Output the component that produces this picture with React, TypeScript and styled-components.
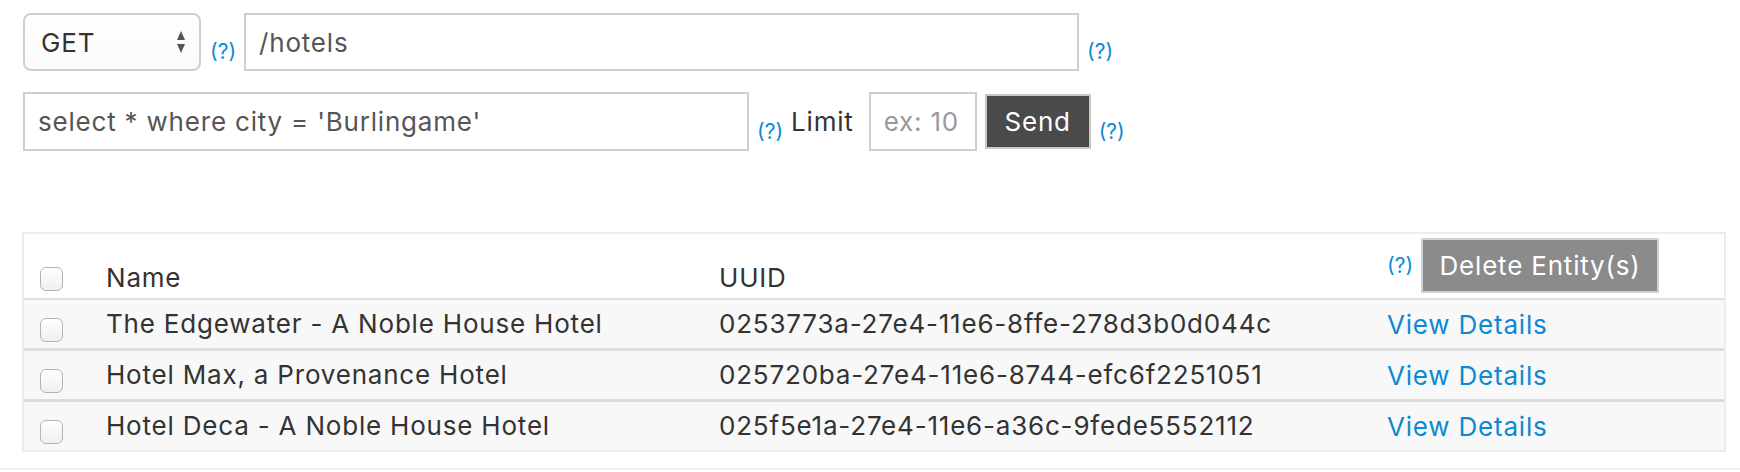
import styled, { createGlobalStyle } from 'styled-components';

const GlobalStyle = createGlobalStyle`
  html, body {
    margin: 0;
    padding: 0;
    background: #fff;
  }
  body {
    font-family: Inter, 'Liberation Sans', sans-serif;
    color: #333;
  }
`;

const Page = styled.div`
  padding: 13px 14px 0 22px;
`;

const FormRow = styled.div<{ $top?: number }>`
  display: flex;
  align-items: flex-end;
  gap: 8px;
  margin-left: 1px;
  margin-top: ${(p) => p.$top ?? 0}px;
`;

const SelectBox = styled.div`
  display: flex;
  align-items: center;
  box-sizing: border-box;
  width: 178px;
  height: 58px;
  padding: 0 14px 0 16px;
  border: 2px solid #cfcfcf;
  border-radius: 8px;
  background: linear-gradient(#fff, #fafafa);
  margin-right: 1px;
`;

const NativeSelect = styled.select`
  flex: 1;
  appearance: none;
  border: none;
  background: transparent;
  outline: none;
  padding: 0;
  font-family: inherit;
  font-size: 26px;
  letter-spacing: 0.8px;
  color: #333;
`;

const TextInput = styled.input<{ $width: number; $height?: number }>`
  box-sizing: border-box;
  width: ${(p) => p.$width}px;
  height: ${(p) => p.$height ?? 58}px;
  padding: 0 13px;
  border: 2px solid #cfcfcf;
  border-radius: 0;
  outline: none;
  font-family: inherit;
  font-size: 26px;
  letter-spacing: 0.8px;
  color: #555;
  &::placeholder {
    color: #999;
  }
`;

const HelpLink = styled.a<{ $center?: boolean }>`
  font-size: 21px;
  line-height: 22px;
  color: #0b8ad3;
  text-decoration: none;
  margin-bottom: ${(p) => (p.$center ? 0 : 8)}px;
`;

const LimitLabel = styled.span`
  align-self: center;
  font-size: 26px;
  letter-spacing: 0.8px;
  color: #333;
  margin-right: 7px;
`;

const SendButton = styled.button`
  align-self: center;
  box-sizing: border-box;
  width: 106px;
  height: 55px;
  padding: 0;
  background: #4a4a4a;
  border: 2px solid #c8c8c8;
  color: #fff;
  font-family: inherit;
  font-size: 26px;
  letter-spacing: 0.8px;
`;

const Table = styled.div`
  margin-top: 81px;
  border: 2px solid #ececec;
`;

const columns = '82px 613px 668px 1fr';

const HeaderRow = styled.div`
  display: grid;
  grid-template-columns: ${columns};
  align-items: end;
  box-sizing: border-box;
  height: 66px;
  padding-bottom: 5px;
  border-bottom: 2px solid #e0e0e0;
  background: #fff;
`;

const BodyRow = styled.div`
  display: grid;
  grid-template-columns: ${columns};
  align-items: center;
  height: 48px;
  background: #f8f8f8;
  border-bottom: 3px solid #dcdcdc;
  &:last-child {
    border-bottom: none;
  }
`;

const Cell = styled.div`
  font-size: 26px;
  line-height: 30px;
  letter-spacing: 0.8px;
  color: #333;
  white-space: nowrap;
`;

const CheckCell = styled.div<{ $bottom: number }>`
  align-self: end;
  padding-left: 16px;
  display: flex;
  margin-bottom: ${(p) => p.$bottom}px;
`;

const Check = styled.span`
  display: block;
  box-sizing: border-box;
  width: 23px;
  height: 24px;
  border: 1px solid #b3b3b3;
  border-radius: 6px;
  background: linear-gradient(#fff, #efefef);
`;

const ActionCell = styled.div`
  display: flex;
  align-items: center;
  gap: 8px;
`;

const DeleteButton = styled.button`
  box-sizing: border-box;
  width: 238px;
  height: 55px;
  padding: 0;
  background: #8b8b8b;
  border: 2px solid #d2d2d2;
  color: #fff;
  font-family: inherit;
  font-size: 26px;
  letter-spacing: 0.8px;
`;

const DetailsLink = styled.a`
  font-size: 26px;
  letter-spacing: 0.8px;
  color: #0b8ad3;
  text-decoration: none;
`;

const BottomRule = styled.div`
  margin-top: 16px;
  height: 2px;
  background: #eeeeee;
`;

const hotels = [
  { name: 'The Edgewater - A Noble House Hotel', uuid: '0253773a-27e4-11e6-8ffe-278d3b0d044c' },
  { name: 'Hotel Max, a Provenance Hotel', uuid: '025720ba-27e4-11e6-8744-efc6f2251051' },
  { name: 'Hotel Deca - A Noble House Hotel', uuid: '025f5e1a-27e4-11e6-a36c-9fede5552112' },
];

function SelectArrows() {
  return (
    <svg width="8" height="22" viewBox="0 0 8 22">
      <polygon points="4,0 8,9 0,9" fill="#555" />
      <polygon points="0,13 8,13 4,22" fill="#555" />
    </svg>
  );
}

export default function App() {
  return (
    <>
      <GlobalStyle />
      <Page>
        <FormRow>
          <SelectBox>
            <NativeSelect defaultValue="GET">
              <option>GET</option>
              <option>POST</option>
              <option>PUT</option>
              <option>DELETE</option>
            </NativeSelect>
            <SelectArrows />
          </SelectBox>
          <HelpLink href="#">(?)</HelpLink>
          <TextInput $width={835} defaultValue="/hotels" />
          <HelpLink href="#">(?)</HelpLink>
        </FormRow>
        <FormRow $top={21}>
          <TextInput $width={726} $height={59} defaultValue="select * where city = 'Burlingame'" />
          <HelpLink href="#">(?)</HelpLink>
          <LimitLabel>Limit</LimitLabel>
          <TextInput $width={108} $height={59} placeholder="ex: 10" />
          <SendButton>Send</SendButton>
          <HelpLink href="#">(?)</HelpLink>
        </FormRow>

        <Table>
          <HeaderRow>
            <CheckCell $bottom={2}>
              <Check />
            </CheckCell>
            <Cell>Name</Cell>
            <Cell>UUID</Cell>
            <ActionCell>
              <HelpLink href="#" $center>
                (?)
              </HelpLink>
              <DeleteButton>Delete Entity(s)</DeleteButton>
            </ActionCell>
          </HeaderRow>
          {hotels.map((h) => (
            <BodyRow key={h.uuid}>
              <CheckCell $bottom={6}>
                <Check />
              </CheckCell>
              <Cell>{h.name}</Cell>
              <Cell>{h.uuid}</Cell>
              <div>
                <DetailsLink href="#">View Details</DetailsLink>
              </div>
            </BodyRow>
          ))}
        </Table>
      </Page>
      <BottomRule />
    </>
  );
}
